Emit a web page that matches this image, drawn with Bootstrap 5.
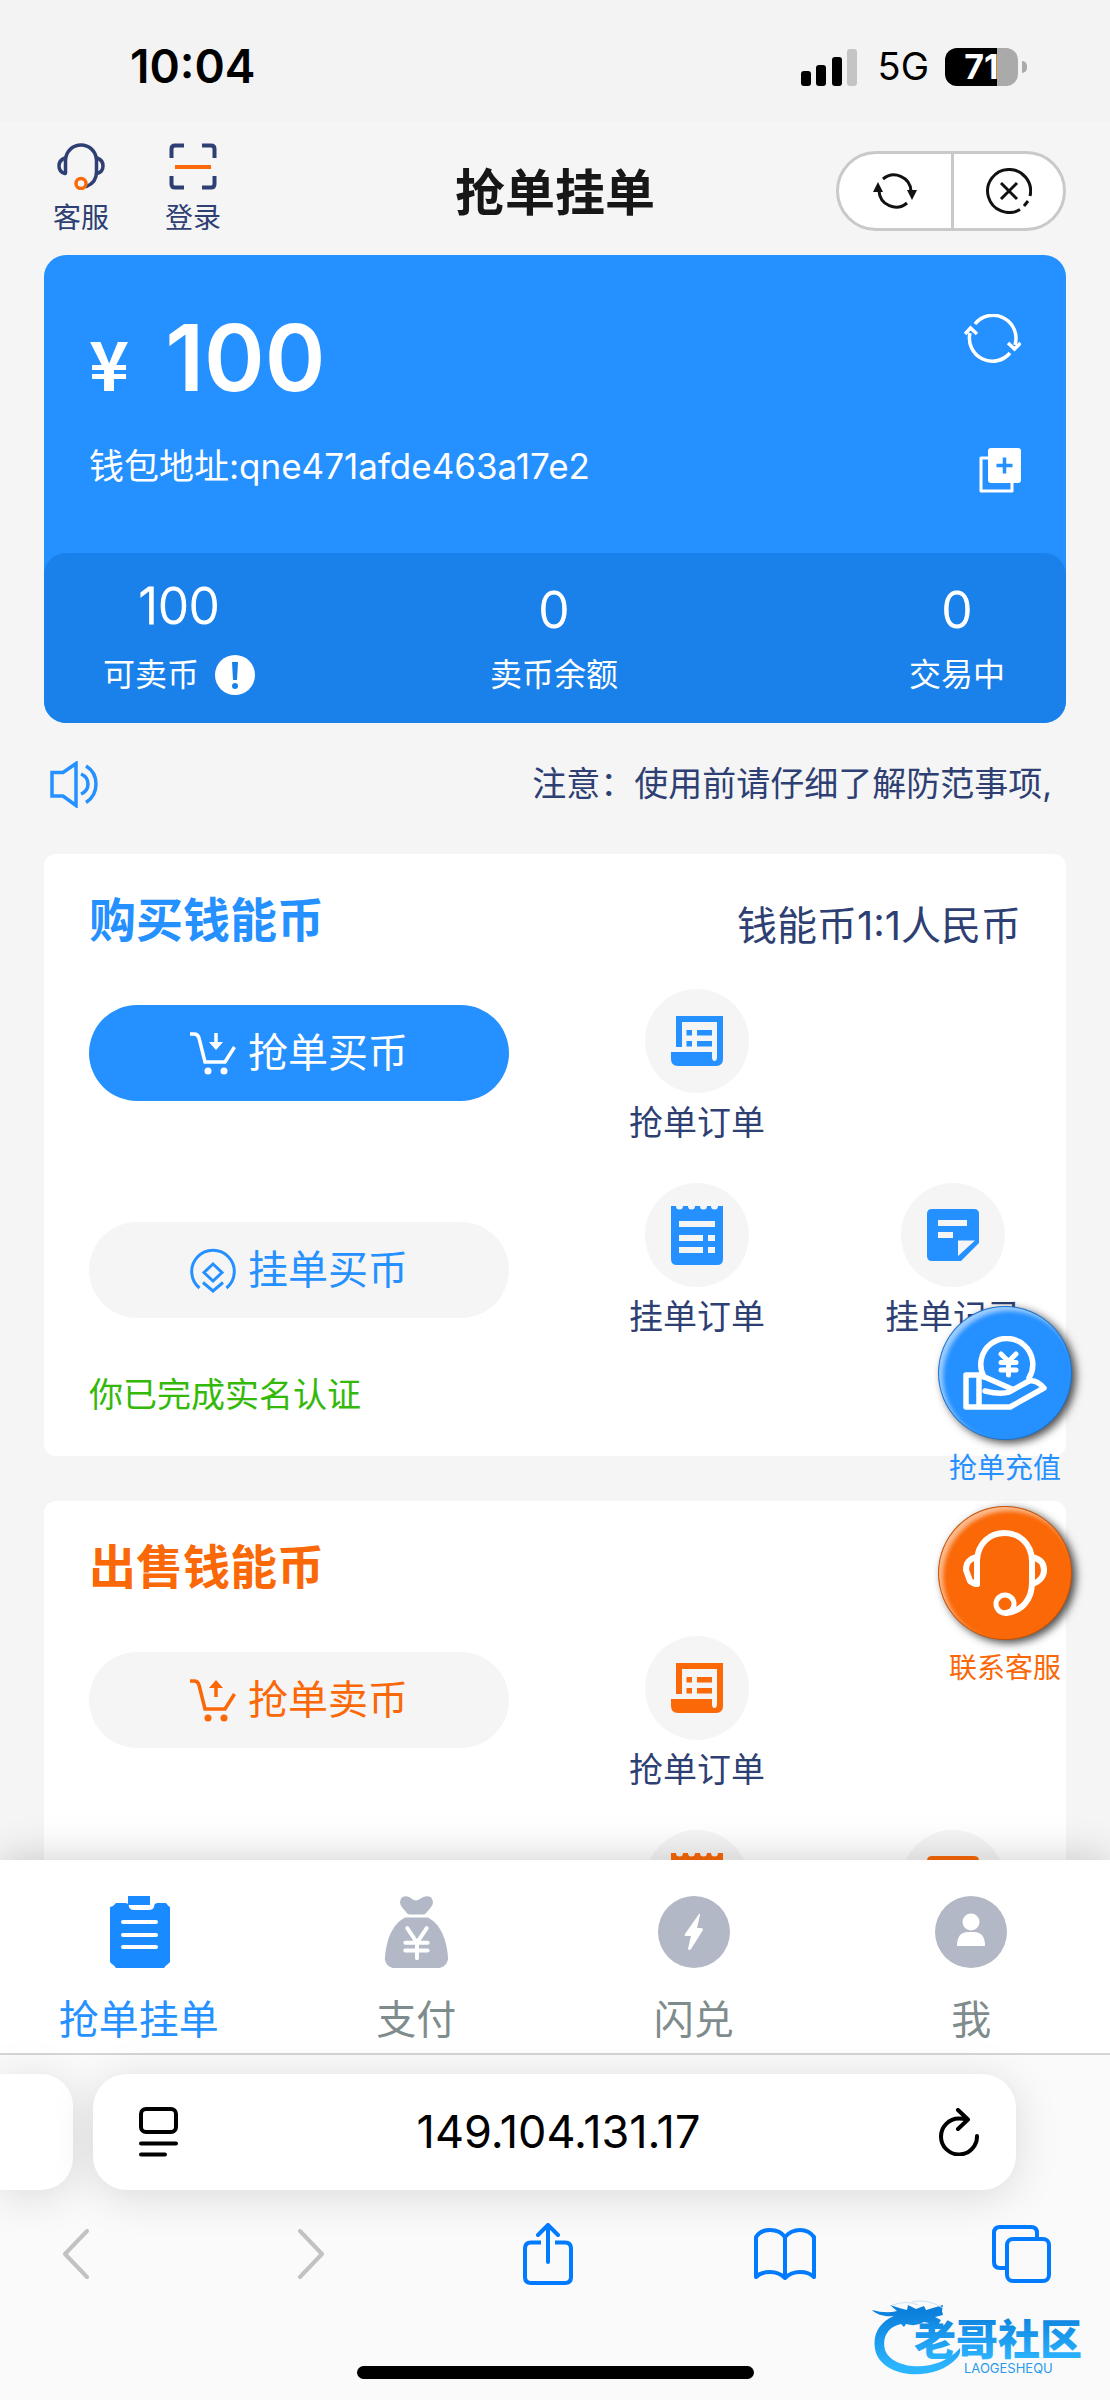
<!DOCTYPE html>
<html lang="zh-CN">
<head>
<meta charset="utf-8">
<meta name="viewport" content="width=device-width, initial-scale=1">
<title>抢单挂单</title>
<link href="https://cdn.jsdelivr.net/npm/bootstrap@5.3.0/dist/css/bootstrap.min.css" rel="stylesheet">
<style>
  :root { --blue: #2590ff; --navy: #2e3f73; --orange: #fa6807; }
  body { font-family: Inter, "Noto Sans CJK SC", sans-serif; background: #f5f5f5; color: var(--navy); line-height: 1.2; }
  svg { display: block; flex: none; }
  a { color: inherit; text-decoration: none; }
  button { border: 0; background: none; padding: 0; color: inherit; }
  .status-bar { height: 122px; padding: 12px 83px 0 130px; background: #f3f3f3; color: #000; }
  .clock { font-size: 46px; font-weight: 600; }
  .network { font-size: 38px; font-weight: 400; }
  .battery { width: 73px; height: 38px; border-radius: 12px; background: linear-gradient(90deg, #000 71%, #aaa 71%); color: #fff; font-size: 34px; font-weight: 700; line-height: 38px; }
  .battery-tip { width: 5px; height: 12px; border-radius: 0 5px 5px 0; background: #aaa; }
  .page-head { display: grid; grid-template-columns: 1fr auto 1fr; height: 133px; padding: 0 44px; }
  .head-links { padding: 21px 0 0 9px; gap: 56px; font-size: 28px; line-height: 36px; }
  .head-links a { gap: 10px; }
  .page-head h1 { font-size: 50px; font-weight: 700; color: #171717; line-height: 70px; margin: 36px 0 0; }
  .capsule { width: 230px; height: 80px; margin-top: 29px; border: 3px solid #c9c9c9; border-radius: 40px; background: #fff; }
  .capsule button + button { border-left: 3px solid #c9c9c9; }
  .wallet { margin: 0 44px; border-radius: 22px; background: var(--blue); color: #fff; }
  .wallet-top { height: 298px; padding: 51px 45px 0 45px; }
  .yen { font-family: "Noto Sans CJK SC", sans-serif; font-size: 68px; font-weight: 700; line-height: 80px; }
  .amount { font-size: 92px; font-weight: 600; line-height: 104px; margin-left: 36px; }
  .address { font-size: 35px; line-height: 48px; margin-top: 32px; }
  .wallet-stats { display: grid; grid-template-columns: 1fr auto 1fr; height: 170px; padding: 23px 61px 0 59px; border-radius: 22px; background: #1b81ea; text-align: center; }
  .stat-num { font-size: 50px; font-weight: 300; line-height: 60px; -webkit-text-stroke: 1px currentColor; }
  .stat-label { font-size: 32px; line-height: 40px; margin-top: 19px; }
  .stat-late { padding-top: 4px; }
  .stat-late .stat-label { margin-top: 15px; }
  .notice { height: 131px; padding: 0 58px 8px 50px; font-size: 34px; }
  .panel { margin: 0 44px 45px; padding: 33px 45px 36px 45px; border-radius: 12px; background: #fff; }
  .panel h2 { font-size: 47px; font-weight: 700; line-height: 66px; margin: 0; }
  .rate { font-size: 40px; line-height: 54px; }
  .action-grid { display: grid; grid-template-columns: 1fr 136px 136px; column-gap: 120px; row-gap: 40px; margin-top: 36px; }
  .pill { height: 96px; gap: 12px; border-radius: 48px; background: #f5f5f5; color: var(--tone); font-size: 40px; width: 100%; }
  .pill.solid { background: var(--blue); color: #fff; }
  .pill.upper { margin-top: 16px; }
  .pill.lower { margin-top: 39px; }
  .entry { font-size: 34px; line-height: 40px; gap: 10px; white-space: nowrap; }
  .disc { width: 104px; height: 104px; border-radius: 50%; background: #f5f5f5; color: var(--tone); }
  .verified { font-size: 34px; line-height: 50px; margin: 33px 0 0; color: #34b90a; }
  .buy { --tone: var(--blue); }
  .sell { --tone: var(--orange); }
  .tone { color: var(--tone); }
  .floats { position: absolute; right: 38px; top: 1184px; gap: 20px; font-size: 28px; line-height: 36px; }
  .floats a { gap: 10px; color: var(--tone); width: 134px; }
  .bubble { width: 134px; height: 134px; border-radius: 50%; color: #fff; background: var(--tone); border: 1px solid rgba(0,0,0,.2); box-shadow: 4px 3px 8px rgba(0,0,0,.7), inset 4px 4px 4px rgba(255,255,255,.55); }
  .tabbar { position: relative; height: 193px; padding-top: 36px; background: #fff; box-shadow: 0 0 40px rgba(0,0,0,.2); color: #7f8c8d; font-size: 40px; line-height: 56px; }
  .tabbar a { gap: 24px; }
  .tabbar svg { color: #b3b8c6; }
  .tabbar .current { color: var(--blue); }
  .tabbar .current svg { color: #198aff; }
  .browser { position: relative; border-top: 2px solid #d5d5d5; background: #fafafa; padding-top: 19px; height: 347px; }
  .prev-tab, .url-box { height: 116px; background: #fff; box-shadow: 0 6px 44px rgba(0,0,0,.13); }
  .prev-tab { width: 73px; border-radius: 0 32px 32px 0; }
  .url-box { margin: 0 94px 0 20px; padding: 0 37px 0 46px; border-radius: 34px; color: #000; }
  .url-box input { border: 0; outline: 0; background: none; text-align: center; font-size: 45px; min-width: 0; color: #000; }
  .tools { height: 61px; margin-top: 33px; padding: 0 58px 0 44px; color: #007aff; }
  .tools button { width: 62px; display: flex; justify-content: center; }
  .tools .off { color: #c2c2c2; }
  .home-bar { width: 397px; height: 13px; border-radius: 7px; background: #000; margin: 82px auto 0; }
  .stamp { position: absolute; right: 16px; bottom: 22px; width: 222px; height: 78px; }
</style>
<script src="https://cdn.jsdelivr.net/npm/bootstrap@5.3.0/dist/js/bootstrap.bundle.min.js"></script>
</head>
<body>
<div class="vh-100 d-flex flex-column overflow-hidden">
  <div class="status-bar d-flex align-items-center justify-content-between flex-shrink-0">
    <div class="clock">10:04</div>
    <div class="d-flex align-items-center">
      <svg width="57" height="37" viewBox="0 0 57 37"><rect x="0" y="22" width="10" height="15" rx="3"/><rect x="15" y="16" width="10" height="21" rx="3"/><rect x="31" y="8" width="10" height="29" rx="3"/><rect x="46" y="0" width="10" height="37" rx="3" fill="#c4c4c4"/></svg>
      <span class="network ms-3 me-3 ps-1">5G</span>
      <span class="battery text-center">71</span><span class="battery-tip ms-1"></span>
    </div>
  </div>

  <main class="flex-grow-1 position-relative overflow-hidden">
    <header class="page-head">
      <nav class="head-links d-flex align-items-start">
        <a href="#" class="d-flex flex-column align-items-center">
          <svg width="48" height="47" viewBox="0 0 48 47" fill="none" stroke="#2e3f73" stroke-width="3.500" stroke-linecap="round"><path d="M8.500 30V17C9 8 16 2 24 2s15 6 15.500 15v12c0 7-4 12-10 14.500"/><path d="M8 15Q2 17 2 23T8 30.500M40 15q6 2 6 8T40 30.500" /><circle cx="24" cy="40.500" r="5" stroke="#fa6807"/></svg>
          <span>客服</span></a>
        <a href="#" class="d-flex flex-column align-items-center">
          <svg width="48" height="47" viewBox="0 0 48 47" fill="none" stroke="#2e3f73" stroke-width="4"><path d="M2.500 15V6q0-3.500 3.500-3.500h9M33 2.500h9q3.500 0 3.500 3.500v9M2.500 33v8q0 3.500 3.500 3.500h9M33 44.500h9q3.500 0 3.500-3.500v-8"/><path d="M6 24h36" stroke="#fa6807"/></svg>
          <span>登录</span></a>
      </nav>
      <h1>抢单挂单</h1>
      <div class="capsule d-flex ms-auto">
        <button type="button" class="w-50 d-flex align-items-center justify-content-center" aria-label="刷新">
          <svg width="44" height="38" viewBox="0 0 44 38" fill="none" stroke="#111" stroke-width="3"><path d="M10 7A17 17 0 0 1 38 19M34 31A17 17 0 0 1 6 19"/><path d="M0 20l5-10 5 10zM34 18h10l-5 10z" fill="#111" stroke="none"/></svg></button>
        <button type="button" class="w-50 d-flex align-items-center justify-content-center" aria-label="关闭">
          <svg width="46" height="46" viewBox="0 0 46 46" fill="none" stroke="#111" stroke-width="3"><path d="M34 41.500A21.500 21.500 0 1 1 44 28M42 33l-4 5M15 15l16 16M31 15L15 31"/></svg></button>
      </div>
    </header>

    <section class="wallet">
      <div class="wallet-top d-flex justify-content-between">
        <div>
          <div class="d-flex align-items-baseline"><span class="yen">¥</span><span class="amount">100</span></div>
          <div class="address">钱包地址:qne471afde463a17e2</div>
        </div>
        <div class="d-flex flex-column align-items-end">
          <button type="button" class="pt-2" aria-label="刷新余额"><svg width="57" height="50" viewBox="0 0 57 50" fill="none" stroke="#fff" stroke-width="3.500"><path d="M11 10A23 23 0 0 1 51 31M46 39A23 23 0 0 1 6 19"/><path d="M1 20l5.500-6 6.500 6M44 29l6.500 6 6-6"/></svg></button>
          <button type="button" class="mt-auto mb-5 pb-2" aria-label="复制地址"><svg class="mb-1" width="42" height="45" viewBox="0 0 42 45"><path d="M9 10H2v33h31v-8" fill="none" stroke="#fff" stroke-width="3" stroke-linejoin="round"/><rect x="9" y="0" width="33" height="35" rx="3" fill="#fff"/><path d="M25.500 9.500v16M17.500 17.500h16" stroke="#2590ff" stroke-width="3.500"/></svg></button>
        </div>
      </div>
      <div class="wallet-stats">
        <div class="me-auto">
          <div class="stat-num">100</div>
          <div class="stat-label d-flex align-items-center"><span>可卖币</span>
            <svg class="ms-3" width="40" height="40" viewBox="0 0 40 40"><circle cx="20" cy="20" r="20" fill="#fff"/><path d="M17 7h6l-1 18h-4z" fill="#1b81ea"/><circle cx="20" cy="31" r="3" fill="#1b81ea"/></svg></div>
        </div>
        <div class="stat-late"><div class="stat-num">0</div><div class="stat-label">卖币余额</div></div>
        <div class="stat-late ms-auto"><div class="stat-num">0</div><div class="stat-label">交易中</div></div>
      </div>
    </section>

    <div class="notice d-flex align-items-center justify-content-between">
      <svg width="48" height="47" viewBox="0 0 48 47" fill="none" stroke="#2590ff" stroke-width="3.500"><path d="M2 11.500h11L26 2.500v42L13 35H2z"/><path d="M31 13q7 3 7 10t-7 10M36 5q10 6 10 18T36 41.500"/></svg>
      <span>注意：使用前请仔细了解防范事项,</span>
    </div>

    <section class="panel buy">
      <div class="d-flex align-items-end justify-content-between"><h2 class="tone">购买钱能币</h2><span class="rate">钱能币1:1人民币</span></div>
      <div class="action-grid">
        <button type="button" class="pill solid upper d-flex align-items-center justify-content-center">
          <svg width="46" height="43" viewBox="0 0 46 43" fill="none" stroke="currentColor" stroke-width="3.500"><path d="M0 2h4q4 0 5 4l6 24h20l9.500-15"/><path d="M26 1v10"/><path d="M19 10h14l-7 8z" fill="currentColor" stroke="none"/><g fill="currentColor" stroke="none"><circle cx="18" cy="39" r="3.500"/><circle cx="34" cy="39" r="3.500"/></g></svg>
          <span>抢单买币</span></button>
        <a href="#" class="entry d-flex flex-column align-items-center"><span class="disc d-flex align-items-center justify-content-center">
          <svg width="52" height="50" viewBox="0 0 52 50" fill="currentColor"><path d="M5 0h47v43q0 7-7 7H7q-7 0-7-7v-7h41v5q0 4 2.500 4t2.500-4V6H11v25H5z"/><path d="M15.500 14H21v5.500h-5.500zM26 14h15v5.500H26zM15.500 25H21v5.500h-5.500zM26 25h15v5.500H26z"/></svg></span>
          <span>抢单订单</span></a>
        <span></span>
        <button type="button" class="pill lower d-flex align-items-center justify-content-center">
          <svg width="46" height="45" viewBox="0 0 46 45" fill="none" stroke="currentColor" stroke-width="3"><path d="M9.500 40A21.300 21.300 0 1 1 36.500 40"/><path d="M23 16l9 8.500-9 8.500-9-8.500zM13 34.500l10 8.500 10-8.500"/></svg>
          <span>挂单买币</span></button>
        <a href="#" class="entry d-flex flex-column align-items-center"><span class="disc d-flex align-items-center justify-content-center">
          <svg width="52" height="59" viewBox="0 0 52 59"><path d="M0 0h5a3.500 3.500 0 0 0 7 0h5a3.500 3.500 0 0 0 7 0h5a3.500 3.500 0 0 0 7 0h4a3.500 3.500 0 0 0 7 0h5v53q0 6-6 6H6q-6 0-6-6z" fill="currentColor"/><path d="M8 15h36v6H8zM8 29h24v6H8zM37 29h7v6h-7zM8 41h24v6H8zM37 41h7v6h-7z" fill="#f5f5f5"/></svg></span>
          <span>挂单订单</span></a>
        <a href="#" class="entry d-flex flex-column align-items-center"><span class="disc d-flex align-items-center justify-content-center">
          <svg width="52" height="52" viewBox="0 0 52 52"><path d="M5 0h42q5 0 5 5v29L34 52H5q-5 0-5-5V5q0-5 5-5z" fill="currentColor"/><path d="M11 11h29v6H11zM11 23h15v6H11zM31 31.500h17L31 47z" fill="#f5f5f5"/></svg></span>
          <span>挂单记录</span></a>
      </div>
      <p class="verified">你已完成实名认证</p>
    </section>

    <section class="panel sell">
      <h2 class="tone">出售钱能币</h2>
      <div class="action-grid">
        <button type="button" class="pill upper d-flex align-items-center justify-content-center">
          <svg width="46" height="43" viewBox="0 0 46 43" fill="none" stroke="currentColor" stroke-width="3.500"><path d="M0 2h4q4 0 5 4l6 24h20l9.500-15"/><path d="M26 18V8"/><path d="M19 9h14l-7-8z" fill="currentColor" stroke="none"/><g fill="currentColor" stroke="none"><circle cx="18" cy="39" r="3.500"/><circle cx="34" cy="39" r="3.500"/></g></svg>
          <span>抢单卖币</span></button>
        <a href="#" class="entry d-flex flex-column align-items-center"><span class="disc d-flex align-items-center justify-content-center">
          <svg width="52" height="50" viewBox="0 0 52 50" fill="currentColor"><path d="M5 0h47v43q0 7-7 7H7q-7 0-7-7v-7h41v5q0 4 2.500 4t2.500-4V6H11v25H5z"/><path d="M15.500 14H21v5.500h-5.500zM26 14h15v5.500H26zM15.500 25H21v5.500h-5.500zM26 25h15v5.500H26z"/></svg></span>
          <span>抢单订单</span></a>
        <span></span>
        <span></span>
        <a href="#" class="entry" aria-label="订单"><span class="disc d-flex align-items-center justify-content-center mx-auto">
          <svg width="52" height="59" viewBox="0 0 52 59"><path d="M0 0h5a3.500 3.500 0 0 0 7 0h5a3.500 3.500 0 0 0 7 0h5a3.500 3.500 0 0 0 7 0h4a3.500 3.500 0 0 0 7 0h5v53q0 6-6 6H6q-6 0-6-6z" fill="currentColor"/></svg></span></a>
        <a href="#" class="entry" aria-label="记录"><span class="disc d-flex align-items-center justify-content-center mx-auto">
          <svg width="52" height="52" viewBox="0 0 52 52"><path d="M5 0h42q5 0 5 5v29L34 52H5q-5 0-5-5V5q0-5 5-5z" fill="currentColor"/></svg></span></a>
      </div>
    </section>

    <aside class="floats d-flex flex-column">
      <a href="#" class="buy d-flex flex-column align-items-center"><span class="bubble d-flex align-items-center justify-content-center">
        <svg width="84" height="74" viewBox="0 0 84 74" fill="none" stroke="currentColor" stroke-width="5.500" stroke-linejoin="round" stroke-linecap="round"><path d="M21 41A26 26 0 1 1 66 42"/><path d="M38 18l7.500 7.500L53 18M38 26.500h15M38 34h15M45.500 27v12" stroke-width="5"/><path d="M3 39h14l32 14-3 3q-8 3-24-1M3 39v32h44l34-19q-8-9-15-7L46 56M16 39v32"/></svg></span>
        <span>抢单充值</span></a>
      <a href="#" class="sell d-flex flex-column align-items-center"><span class="bubble d-flex align-items-center justify-content-center">
        <svg width="84" height="86" viewBox="0 0 84 86" fill="none" stroke="currentColor" stroke-width="6" stroke-linecap="round" stroke-linejoin="round"><path d="M14 54V30C15 13 27 3 41.500 3S68 13 69 30v22c0 17-9 29-26 31"/><path d="M14 27C5 29 3 34 3 40t4 11q4 3 7 3M69 27c9 2 12 7 12 13s-4 12-12 14"/><circle cx="42" cy="74" r="9" stroke-width="5"/></svg></span>
        <span>联系客服</span></a>
    </aside>
  </main>

  <nav class="tabbar d-flex flex-shrink-0">
    <a href="#" class="current w-25 d-flex flex-column align-items-center"><svg width="72" height="72" viewBox="0 0 72 72"><path d="M13 7h9q4 0 4 4 1 3 5 3h15q4 0 5-3 0-4 4-4h8q2 3 4 4v55q-1 1-2 2-2 1-4 4H13q-2-3-4-4-2-1-2-3V11q4-1 6-4z" fill="currentColor"/><path d="M25 0h22v9H25z" fill="currentColor"/><path d="M20 26h33M20 39h33M20 51h33" stroke="#fff" stroke-width="4" stroke-linecap="round"/></svg><span>抢单挂单</span></a>
    <a href="#" class="w-25 d-flex flex-column align-items-center"><svg width="72" height="72" viewBox="0 0 72 74"><path d="M22 1q6-2 10 2 4 3 8 0 5-4 11-2 5 5 0 11l-5 6q-1 1-3 1H30q-2 0-3-1l-5-6q-5-6 0-11z" fill="currentColor"/><path d="M25 22h23c13 6 20 23 21 43q-2 8-9 9H12q-7-2-8-9C5 45 12 28 25 22z" fill="currentColor"/><path d="M27 33l10 15 10-15M25 48h23M25 56h23M37 48v16" fill="none" stroke="#fff" stroke-width="4" stroke-linecap="round"/></svg><span>支付</span></a>
    <a href="#" class="w-25 d-flex flex-column align-items-center"><svg width="72" height="72" viewBox="0 0 72 72"><circle cx="36" cy="36" r="36" fill="currentColor"/><path d="M41 18L27 38q-1 2 1 2h5l-3 13q1 2 3 0l12-19q0-2-2-2h-4l3-13q0-2-1-1z" fill="#fff"/></svg><span>闪兑</span></a>
    <a href="#" class="w-25 d-flex flex-column align-items-center"><svg width="72" height="72" viewBox="0 0 72 72"><circle cx="36" cy="36" r="36" fill="currentColor"/><circle cx="36" cy="26" r="8.500" fill="#fff"/><path d="M22 50q0-14 11-14h6q11 0 11 14z" fill="#fff"/></svg><span>我</span></a>
  </nav>

  <footer class="browser flex-shrink-0">
    <div class="d-flex">
      <div class="prev-tab flex-shrink-0"></div>
      <div class="url-box flex-grow-1 d-flex align-items-center">
        <svg width="39" height="50" viewBox="0 0 39 50" fill="none" stroke="#000" stroke-width="4" stroke-linecap="round"><rect x="2" y="2" width="35" height="23" rx="5"/><path d="M2 36.500h35M2 47.500h24"/></svg>
        <input class="flex-grow-1" type="text" value="149.104.131.17" aria-label="网址">
        <button type="button" aria-label="重新载入"><svg width="40" height="48" viewBox="0 0 40 48" fill="none" stroke="#000" stroke-width="4" stroke-linecap="round" stroke-linejoin="round"><path d="M38 28A18 18 0 1 1 20 10.500q4 0 8 1M19 2l10 9.500L19 21"/></svg></button>
      </div>
    </div>
    <nav class="tools d-flex align-items-center justify-content-between">
      <button type="button" class="off" aria-label="后退"><svg width="27" height="50" viewBox="0 0 27 50" fill="none" stroke="currentColor" stroke-width="4" stroke-linecap="round" stroke-linejoin="round"><path d="M25 2L3 25l22 23"/></svg></button>
      <button type="button" class="off" aria-label="前进"><svg width="27" height="50" viewBox="0 0 27 50" fill="none" stroke="currentColor" stroke-width="4" stroke-linecap="round" stroke-linejoin="round"><path d="M2 2l22 23L2 48"/></svg></button>
      <button type="button" aria-label="分享"><svg width="50" height="62" viewBox="0 0 50 62" fill="none" stroke="currentColor" stroke-width="4" stroke-linejoin="round"><path d="M18 19.500H8q-6 0-6 6V54q0 6 6 6h34q6 0 6-6V25.500q0-6-6-6H32"/><path d="M25 39V2M15 12L25 2l10 10" stroke-linecap="round"/></svg></button>
      <button type="button" aria-label="书签"><svg width="62" height="52" viewBox="0 0 62 52" fill="none" stroke="currentColor" stroke-width="4" stroke-linejoin="round"><path d="M31 9Q26 2 16 2T2 9v40q5-5 14-5t15 6q6-6 15-6t14 5V9q-5-7-14-7T31 9v41"/></svg></button>
      <button type="button" aria-label="标签页"><svg width="59" height="58" viewBox="0 0 59 58" fill="none" stroke="currentColor" stroke-width="4"><path d="M15 43H8q-6 0-6-6V8q0-6 6-6h31q6 0 6 6v5"/><rect x="15" y="14" width="42" height="42" rx="6"/></svg></button>
    </nav>
    <div class="home-bar"></div>
    <svg class="stamp" viewBox="0 0 222 78" role="img" aria-label="老哥社区 LAOGESHEQU">
      <defs><linearGradient id="sea" x1="0" y1="0" x2="0" y2="1"><stop offset=".1" stop-color="#0b7fdc"/><stop offset=".9" stop-color="#2cb5ff"/></linearGradient></defs>
      <path d="M0 10q14 4 25 1L18 5q12 4 17 5l1-5 8 4 8-3 2 4 17-5-1 6 1 4-8 2 6 3-3 5-14-3q-8 5-18 2l-2 3-3-3C15 27 10 38 13 50c7 20 53 24 75-2q1 6-3 10c-20 23-71 22-81-5C-1 36 7 22 22 16 13 17 5 15 0 10z" fill="url(#sea)"/>
      <path d="M20 5q16-5 26 0M40 2q14-4 31 6" fill="none" stroke="#c9e2f5"/>
      <text x="42" y="55" font-size="42" font-weight="900" font-family="'Noto Sans CJK SC', sans-serif" fill="url(#sea)">老哥社区</text>
      <text x="92" y="73" font-size="13" font-family="Inter, sans-serif" fill="#2a9bea">LAOGESHEQU</text>
    </svg>
  </footer>
</div>
</body>
</html>
